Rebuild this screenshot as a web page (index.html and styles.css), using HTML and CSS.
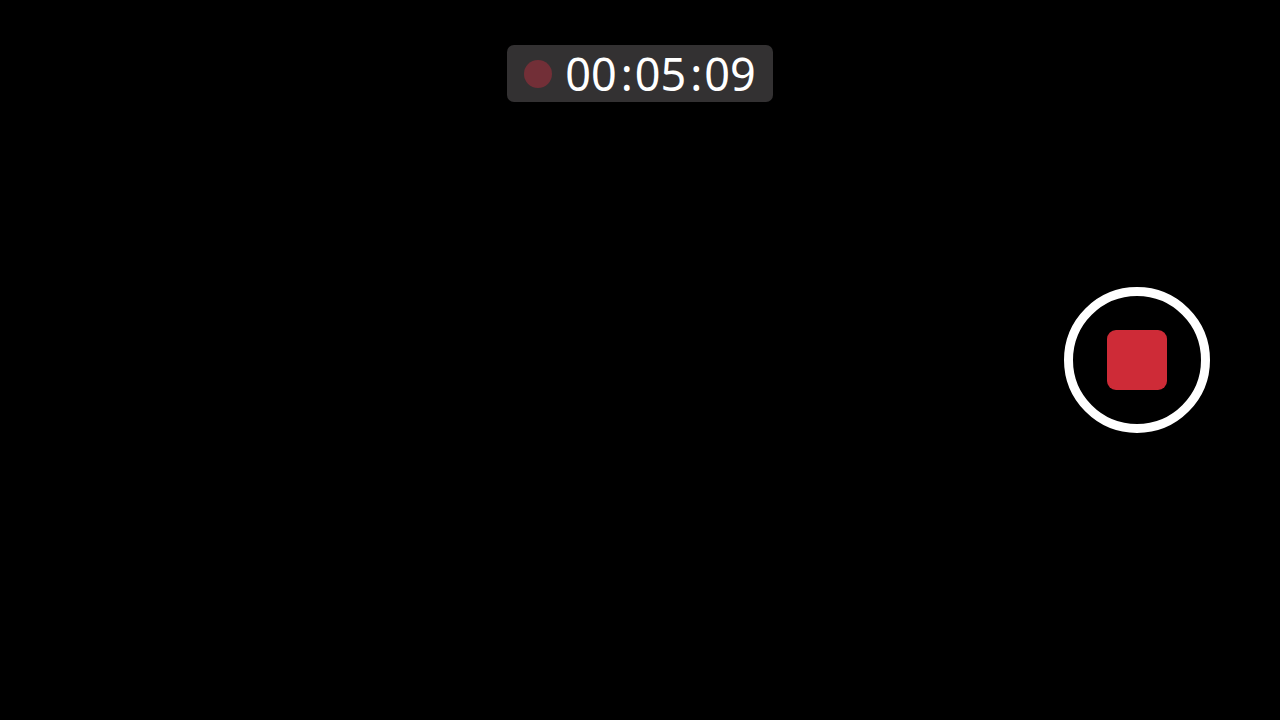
FILE: index.html
```html
<!DOCTYPE html>
<html lang="en">
<head>
    <meta charset="UTF-8">
    <meta name="viewport" content="width=device-width, initial-scale=1.0">
    <title>Recording</title>
    <link rel="stylesheet" href="styles.css">
</head>
<body>

    <main class="recorder">
        <div class="timer" role="timer">
            <span class="rec-dot"></span>
            <time class="time">00<span class="colon">:</span>05<span class="colon">:</span>09</time>
        </div>

        <button class="stop-button" type="button" aria-label="Stop recording">
            <span class="stop-icon"></span>
        </button>
    </main>

</body>
</html>
```

FILE: styles.css
```css
* {
    box-sizing: border-box;
}

body {
    margin: 0;
    background-color: #000;
    color: #fff;
    font-family: "Noto Sans", "Open Sans", sans-serif;
}

/* timer and button share one cell, each aligned on its own side */
.recorder {
    display: grid;
    grid-template-areas: "view";
    min-height: 100vh;
}

.timer {
    grid-area: view;
    align-self: start;
    justify-self: center;
    display: flex;
    align-items: center;
    gap: 13px;
    margin-top: 45px;
    padding: 0 17px;
    border-radius: 7px;
    background-color: #333132;
}

.rec-dot {
    width: 28px;
    height: 28px;
    border-radius: 50%;
    background-color: #722f37;
}

.time {
    font-size: 45px;
    line-height: 57px;
}

.colon {
    margin: 0 2px 0 4px;
}

.stop-button {
    grid-area: view;
    align-self: center;
    justify-self: end;
    display: flex;
    align-items: center;
    justify-content: center;
    width: 146px;
    height: 146px;
    margin-right: 70px;
    padding: 0;
    border: 9px solid #fff;
    border-radius: 50%;
    background: none;
    cursor: pointer;
}

.stop-icon {
    width: 60px;
    height: 60px;
    border-radius: 9px;
    background-color: #ce2b37;
}
```
